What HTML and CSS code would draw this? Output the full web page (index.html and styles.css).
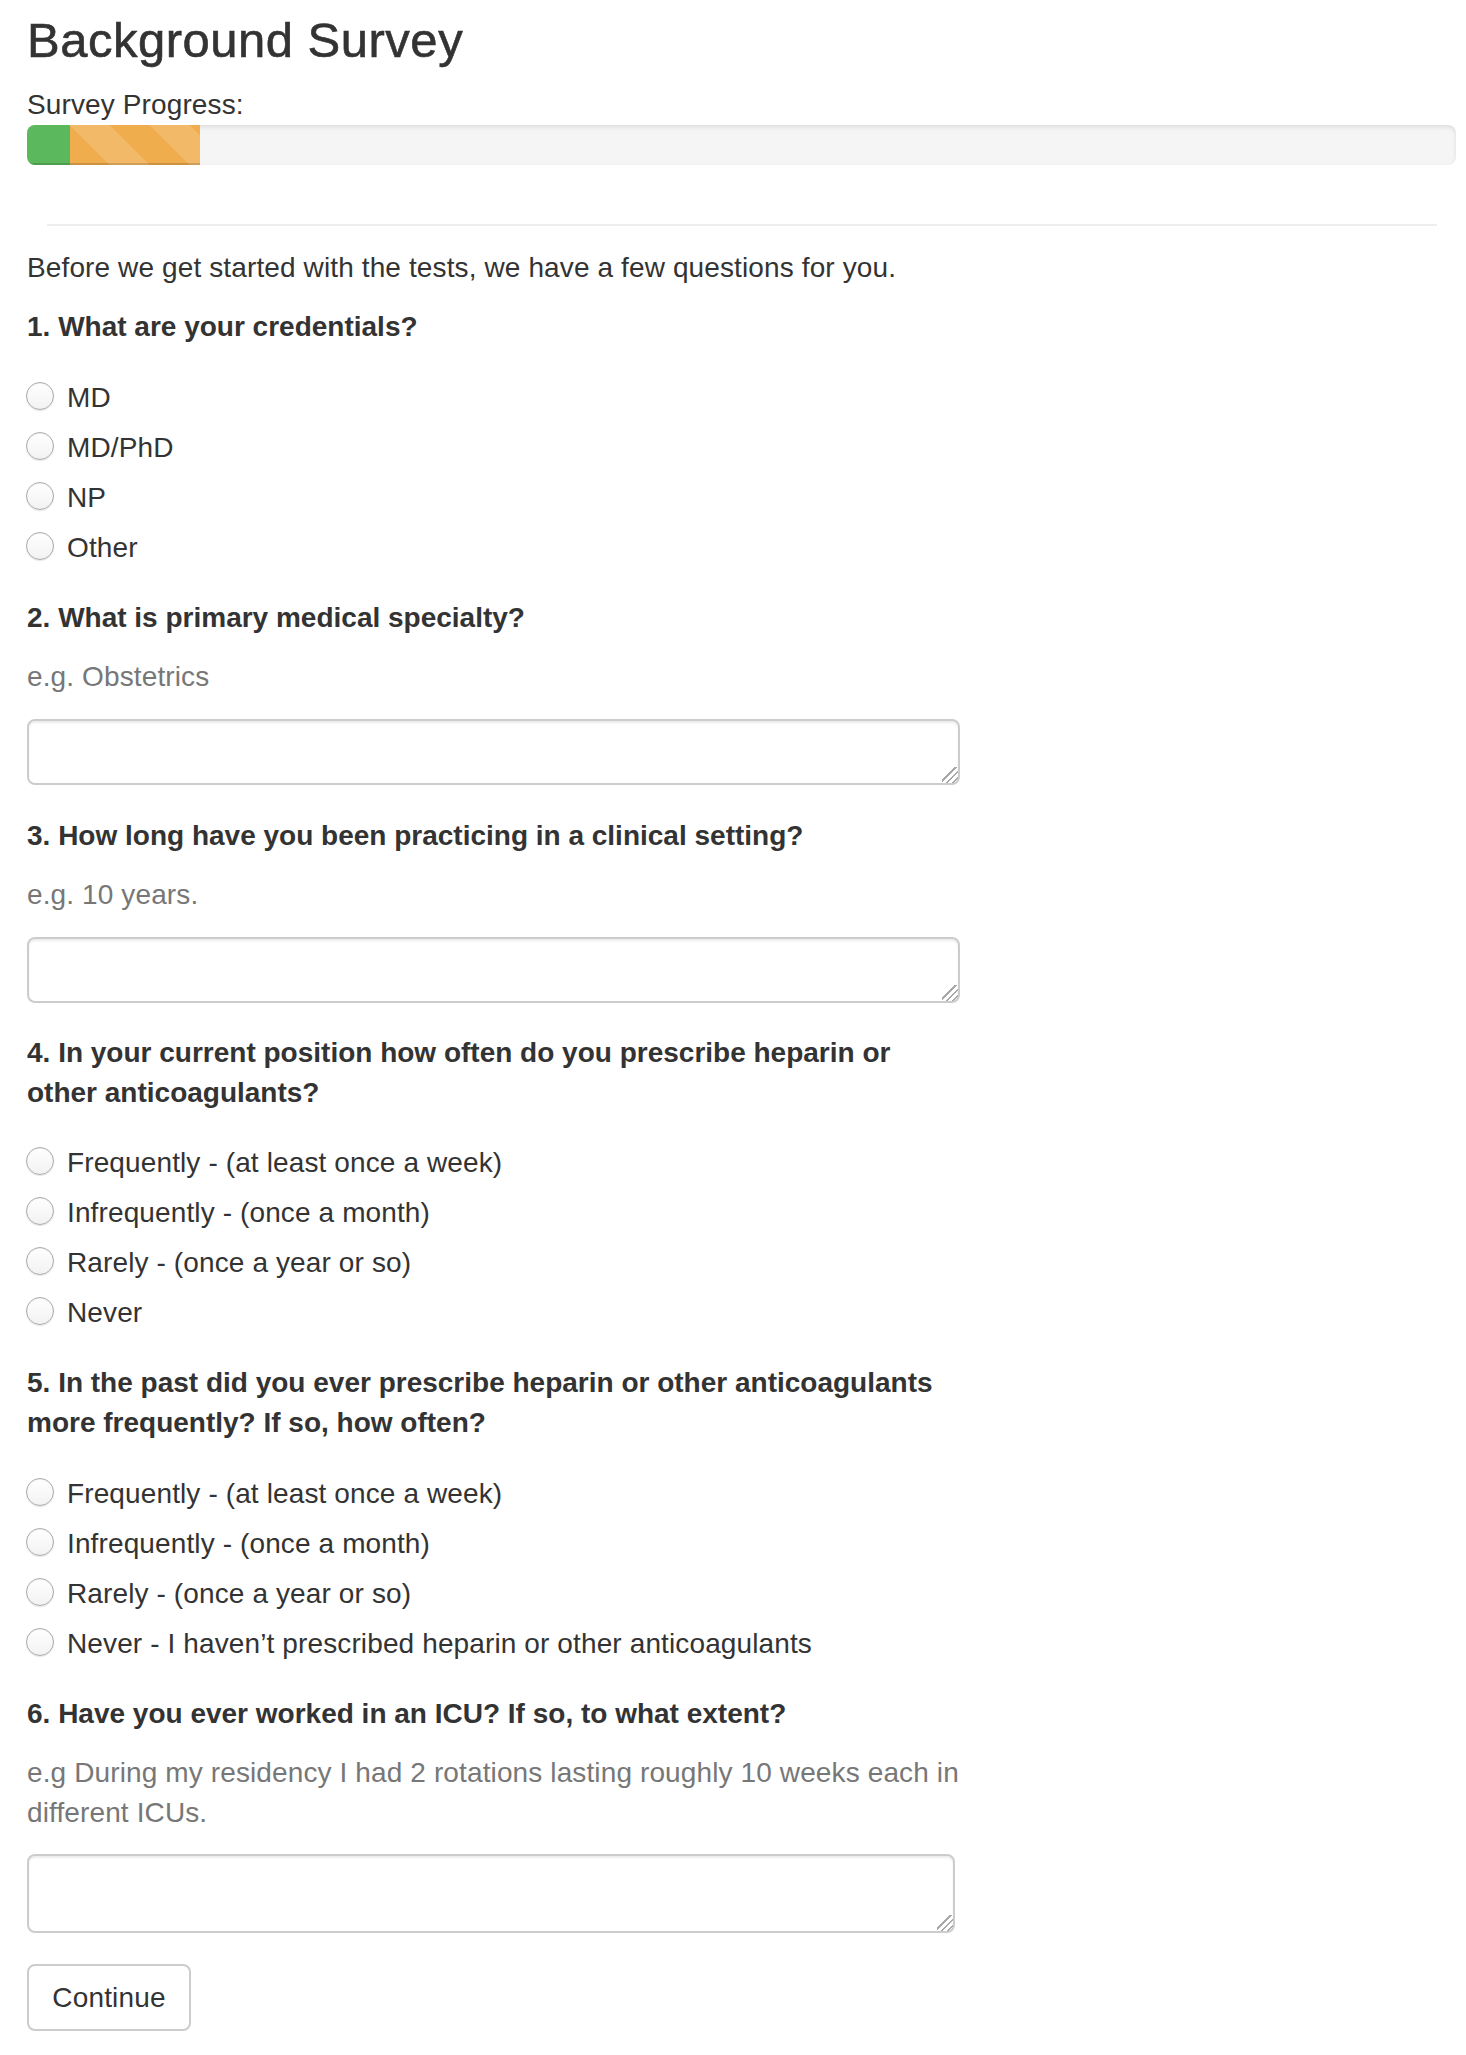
FILE: index.html
```html
<!DOCTYPE html>
<html lang="en">
<head>
<meta charset="utf-8">
<title>Background Survey</title>
<link rel="stylesheet" href="styles.css">
</head>
<body>
<main class="page">
  <h1 class="title">Background Survey</h1>
  <div class="progress-label">Survey Progress:</div>
  <div class="progress">
    <div class="bar bar-success" style="width:43px"></div>
    <div class="bar bar-warning" style="width:130px"></div>
  </div>
  <hr class="divider">

  <form class="survey">
    <p class="intro">Before we get started with the tests, we have a few questions for you.</p>

    <section class="question">
      <div class="q-title">1. What are your credentials?</div>
      <div class="options">
        <label class="option"><input type="radio" name="cred"><span>MD</span></label>
        <label class="option"><input type="radio" name="cred"><span>MD/PhD</span></label>
        <label class="option"><input type="radio" name="cred"><span>NP</span></label>
        <label class="option"><input type="radio" name="cred"><span>Other</span></label>
      </div>
    </section>

    <section class="question">
      <div class="q-title">2. What is primary medical specialty?</div>
      <div class="hint">e.g. Obstetrics</div>
      <div class="field-wrap"><textarea class="field"></textarea></div>
    </section>

    <section class="question">
      <div class="q-title">3. How long have you been practicing in a clinical setting?</div>
      <div class="hint">e.g. 10 years.</div>
      <div class="field-wrap"><textarea class="field"></textarea></div>
    </section>

    <section class="question question-after-field">
      <div class="q-title">4. In your current position how often do you prescribe heparin or<br>other anticoagulants?</div>
      <div class="options options-tight">
        <label class="option"><input type="radio" name="cur"><span>Frequently - (at least once a week)</span></label>
        <label class="option"><input type="radio" name="cur"><span>Infrequently - (once a month)</span></label>
        <label class="option"><input type="radio" name="cur"><span>Rarely - (once a year or so)</span></label>
        <label class="option"><input type="radio" name="cur"><span>Never</span></label>
      </div>
    </section>

    <section class="question">
      <div class="q-title">5. In the past did you ever prescribe heparin or other anticoagulants<br>more frequently? If so, how often?</div>
      <div class="options">
        <label class="option"><input type="radio" name="past"><span>Frequently - (at least once a week)</span></label>
        <label class="option"><input type="radio" name="past"><span>Infrequently - (once a month)</span></label>
        <label class="option"><input type="radio" name="past"><span>Rarely - (once a year or so)</span></label>
        <label class="option"><input type="radio" name="past"><span>Never - I haven’t prescribed heparin or other anticoagulants</span></label>
      </div>
    </section>

    <section class="question">
      <div class="q-title">6. Have you ever worked in an ICU? If so, to what extent?</div>
      <div class="hint">e.g During my residency I had 2 rotations lasting roughly 10 weeks each in<br>different ICUs.</div>
      <div class="field-wrap field-wrap-tall"><textarea class="field field-tall"></textarea></div>
    </section>

    <button type="button" class="btn">Continue</button>
  </form>
</main>
</body>
</html>
```

FILE: styles.css
```css
html, body {
  margin: 0;
  padding: 0;
  background: #fff;
}

body {
  font-family: "Liberation Sans", Arial, Helvetica, sans-serif;
  font-size: 28px;
  line-height: 40px;
  letter-spacing: 0.12px;
  color: #333;
}

.page {
  padding: 14px 10px 20px 27px;
}

.title {
  margin: 0;
  font-size: 49px;
  line-height: 53px;
  font-weight: 400;
  letter-spacing: 0.5px;
  color: #333;
  -webkit-text-stroke: 0.6px #333;
}

.progress-label {
  margin-top: 18px;
  height: 40px;
}

.progress {
  display: flex;
  height: 40px;
  border-radius: 8px;
  overflow: hidden;
  background: #f5f5f5;
  box-shadow: inset 0 2px 4px rgba(0, 0, 0, 0.1);
}

.bar {
  height: 100%;
  box-shadow: inset 0 -2px 0 rgba(0, 0, 0, 0.15);
}

.bar-success {
  background-color: #5cb85c;
}

.bar-warning {
  background-color: #f0ad4e;
  background-image: linear-gradient(45deg,
    rgba(255, 255, 255, 0.15) 25%, transparent 25%,
    transparent 50%, rgba(255, 255, 255, 0.15) 50%,
    rgba(255, 255, 255, 0.15) 75%, transparent 75%, transparent);
  background-size: 80px 80px;
}

.divider {
  margin: 59px 19px 0 20px;
  border: 0;
  border-top: 2px solid #eee;
  height: 0;
}

.survey {
  width: 933px;
  margin-top: 22px;
  display: flex;
  flex-direction: column;
  align-items: flex-start;
}

.intro {
  margin: 0;
  white-space: nowrap;
}

.question {
  display: flex;
  flex-direction: column;
  align-self: stretch;
  margin-top: 19px;
}

.question + .question {
  margin-top: 31px;
}

.question + .question-after-field {
  margin-top: 30px;
}

.q-title {
  font-weight: 700;
  letter-spacing: 0;
  white-space: nowrap;
}

.options {
  display: flex;
  flex-direction: column;
  gap: 10px;
  margin-top: 30px;
}

.options-tight {
  margin-top: 29px;
}

.option {
  display: flex;
  align-items: center;
  gap: 13px;
  height: 40px;
  white-space: nowrap;
}

.option span {
  position: relative;
  top: 1px;
}

.option input {
  -webkit-appearance: none;
  appearance: none;
  margin: 0 0 0 -1px;
  width: 28px;
  height: 28px;
  border-radius: 50%;
  border: 1px solid #aaa;
  background: linear-gradient(#ffffff, #f2f2f2);
  box-shadow: inset 0 1px 1px rgba(0, 0, 0, 0.05), 0 1px 1px rgba(0, 0, 0, 0.1);
  box-sizing: border-box;
  flex: none;
  position: relative;
  top: -1px;
}

.hint {
  margin-top: 19px;
  color: #777;
  white-space: nowrap;
}

.field-wrap {
  position: relative;
  margin-top: 22px;
  width: 933px;
}

.field-wrap::after {
  content: "";
  position: absolute;
  right: 2px;
  bottom: 2px;
  width: 16px;
  height: 16px;
  pointer-events: none;
  background: linear-gradient(135deg,
    transparent 40%, #a8a8a8 40%, #a8a8a8 47%,
    transparent 47%, transparent 60%, #a8a8a8 60%, #a8a8a8 67%,
    transparent 67%, transparent 80%, #a8a8a8 80%, #a8a8a8 87%,
    transparent 87%);
}

.field {
  display: block;
  width: 100%;
  height: 66px;
  box-sizing: border-box;
  border: 2px solid #ccc;
  border-radius: 8px;
  padding: 12px 24px;
  box-shadow: inset 0 2px 2px rgba(0, 0, 0, 0.075);
  font: inherit;
  color: #555;
  background: #fff;
  resize: none;
  margin: 0;
}

.field-wrap-tall {
  margin-top: 21px;
  width: 928px;
}

.field-tall {
  height: 79px;
}

.btn {
  margin-top: 31px;
  width: 164px;
  height: 67px;
  box-sizing: border-box;
  border: 2px solid #ccc;
  border-radius: 8px;
  background: #fff;
  color: #333;
  font-family: inherit;
  font-size: 28px;
  line-height: 40px;
  letter-spacing: 0.15px;
  padding: 0;
  cursor: pointer;
}
```
